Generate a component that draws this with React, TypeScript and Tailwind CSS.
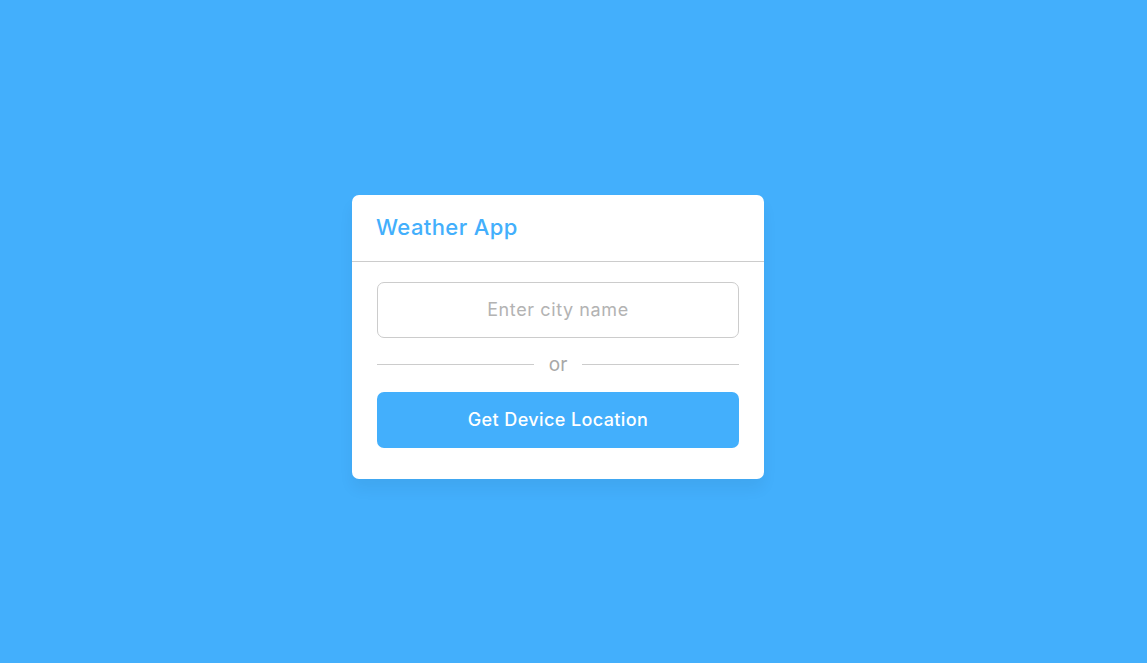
const App = () => {
  return (
    <div
      className="flex h-screen w-full items-center justify-center bg-[#43affc] pt-[10px] pr-[31px]"
      style={{ fontFamily: "Inter, 'Open Sans', sans-serif" }}
    >
      <div className="w-[412px] rounded-[7px] bg-white shadow-[0_10px_15px_rgba(0,0,0,0.05)]">
        <header className="flex h-[67px] items-center border-b border-[#cccccc] px-6">
          <h1 className="text-[22px] font-medium tracking-[0.4px] text-[#43affc]">Weather App</h1>
        </header>

        <section className="flex flex-col px-[25px] pt-5 pb-[31px]">
          <input
            type="text"
            placeholder="Enter city name"
            className="h-14 w-full rounded-[7px] border border-[#cccccc] text-center text-[18px] tracking-[0.6px] outline-none placeholder:text-[#b3b3b3]"
          />

          <div className="my-[15px] flex h-6 items-center gap-[15px]">
            <span className="h-px flex-1 bg-[#cccccc]" />
            <span className="pb-px text-[19px] leading-none text-[#a8a8a8]">or</span>
            <span className="h-px flex-1 bg-[#cccccc]" />
          </div>

          <button className="h-14 w-full rounded-[7px] bg-[#43affc] text-[18px] font-medium tracking-[0.4px] text-white">
            Get Device Location
          </button>
        </section>
      </div>
    </div>
  );
};

export default App;
